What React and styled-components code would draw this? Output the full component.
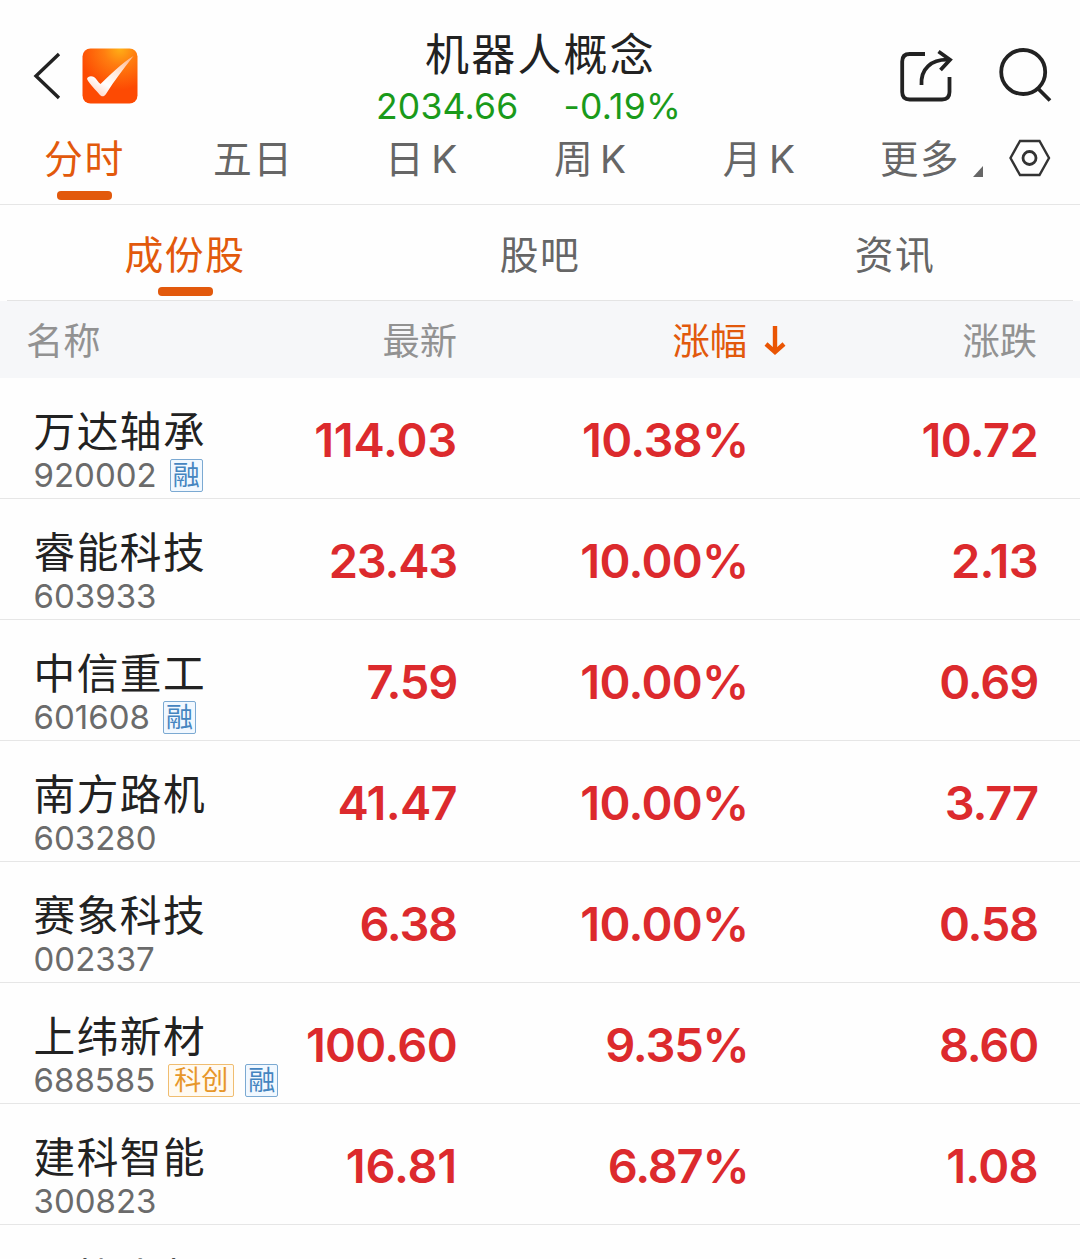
import React from 'react'
import styled, { createGlobalStyle } from 'styled-components'

const periods = ['分时', '五日', '日 K', '周 K', '月 K']
const sections = ['成份股', '股吧', '资讯']

const stocks = [
  { name: '万达轴承', code: '920002', tags: ['融'], price: '114.03', rate: '10.38%', change: '10.72' },
  { name: '睿能科技', code: '603933', tags: [], price: '23.43', rate: '10.00%', change: '2.13' },
  { name: '中信重工', code: '601608', tags: ['融'], price: '7.59', rate: '10.00%', change: '0.69' },
  { name: '南方路机', code: '603280', tags: [], price: '41.47', rate: '10.00%', change: '3.77' },
  { name: '赛象科技', code: '002337', tags: [], price: '6.38', rate: '10.00%', change: '0.58' },
  { name: '上纬新材', code: '688585', tags: ['科创', '融'], price: '100.60', rate: '9.35%', change: '8.60' },
  { name: '建科智能', code: '300823', tags: [], price: '16.81', rate: '6.87%', change: '1.08' },
  { name: '三协电机', code: '', tags: [], price: '', rate: '', change: '' },
]

// the narrow "1" needs more room than the other digits
const tracking = (text) => (text.split('1').length - 1) * 0.5 - 1.2

const Logo = () => (
  <svg width='56' height='56' viewBox='0 0 56 56'>
    <defs>
      <radialGradient id='logoBg' cx='0.68' cy='0' r='0.75'>
        <stop offset='0' stopColor='#ffb016' />
        <stop offset='0.4' stopColor='#ff7d10' />
        <stop offset='1' stopColor='#fd4a03' />
      </radialGradient>
      <linearGradient id='logoTick' x1='1' y1='0' x2='0.3' y2='1'>
        <stop offset='0' stopColor='#ffb080' />
        <stop offset='0.45' stopColor='#ffeade' />
        <stop offset='0.75' stopColor='#ffffff' />
        <stop offset='1' stopColor='#ffd9cc' />
      </linearGradient>
    </defs>
    <rect x='0.5' y='0.5' width='55' height='55' rx='8' fill='url(#logoBg)' />
    <path
      d='M5 31C5.500 28 9.500 27.500 12 29C14.500 30.500 16 34.500 18.500 36C28 27 40 15 51.500 8C42 20 32 33 24 46C22 49 19.500 49 17.500 46.500C14 42 8 37 5 31Z'
      fill='url(#logoTick)'
    />
  </svg>
)

const Cell = ({ children }) => <Value $tracking={tracking(children)}>{children}</Value>

const App = () => {
  return (
    <Page>
      <GlobalStyle />
      <Header>
        <HeaderLeft>
          <svg width='28' height='48' viewBox='0 0 28 48' fill='none' stroke='#222' strokeWidth='3.4'>
            <path d='M26 2L3 24L26 46' />
          </svg>
          <Logo />
        </HeaderLeft>
        <HeaderCenter>
          <Title>机器人概念</Title>
          <Quote>
            <span>2034.66</span>
            <span>-0.19%</span>
          </Quote>
        </HeaderCenter>
        <HeaderRight>
          <svg width='54' height='54' viewBox='0 0 54 54' fill='none' stroke='#222' strokeWidth='3.8'>
            <path d='M25 6H9.700Q2.200 6 2.200 13.500V44Q2.200 51.500 9.700 51.500H42Q49.500 51.500 49.500 44V29' />
            <path d='M21.500 37C20.500 21 31 11 49 11.700' />
            <path d='M38.500 3.500L50 11.700L40.500 22' />
          </svg>
          <svg width='54' height='56' viewBox='0 0 54 56' fill='none' stroke='#222' strokeWidth='3.8'>
            <circle cx='25.200' cy='24' r='22' />
            <path d='M39.500 40L52 52.500' />
          </svg>
        </HeaderRight>
      </Header>

      <PeriodBar>
        {periods.map((p, i) => (
          <Tab key={p} $active={i === 0}>
            <span>{p}</span>
          </Tab>
        ))}
        <More>
          更多
          <svg width='10' height='11' viewBox='0 0 10 11'>
            <path d='M10 0V11H0Z' fill='#666' />
          </svg>
        </More>
        <svg width='42' height='38' viewBox='0 0 42 38' fill='none' stroke='#333'>
          <path d='M11 2H30.500L40 19L30.500 36H11L1.500 19Z' strokeWidth='2.400' />
          <circle cx='20.500' cy='19' r='6.500' strokeWidth='2.800' />
        </svg>
      </PeriodBar>

      <SectionBar>
        {sections.map((s, i) => (
          <Tab key={s} $active={i === 0}>
            <span>{s}</span>
          </Tab>
        ))}
      </SectionBar>

      <TableHead>
        <HeadCell $left>名称</HeadCell>
        <HeadCell>最新</HeadCell>
        <HeadCell $sorted>
          涨幅
          <SortArrow width='22' height='30' viewBox='0 0 22 30' fill='none' stroke='#ea5504' strokeWidth='4.4'>
            <path d='M11 0V26' />
            <path d='M2 18L11 26L20 18' />
          </SortArrow>
        </HeadCell>
        <HeadCell>涨跌</HeadCell>
      </TableHead>

      {stocks.map((s) => (
        <Row key={s.name}>
          <div>
            <Name>{s.name}</Name>
            <Meta>
              <Code>{s.code}</Code>
              {s.tags.map((t) => (
                <Tag key={t} $wide={t.length > 1}>
                  {t}
                </Tag>
              ))}
            </Meta>
          </div>
          <Cell>{s.price}</Cell>
          <Cell>{s.rate}</Cell>
          <Cell>{s.change}</Cell>
        </Row>
      ))}
    </Page>
  )
}

export default App

const GlobalStyle = createGlobalStyle`
  * {
    box-sizing: border-box;
  }
  body {
    margin: 0;
    background-color: #fefefe;
    font-family: Inter, 'Noto Sans CJK SC', sans-serif;
  }
  svg {
    display: block;
    flex-shrink: 0;
  }
`
const Page = styled.div`
  width: 1080px;
  height: 1259px;
  overflow: hidden;
  background-color: #fefefe;
`
const Header = styled.div`
  height: 126px;
  padding: 0 28px 0 33px;
  display: grid;
  grid-template-columns: 1fr auto 1fr;
`
const HeaderLeft = styled.div`
  padding-top: 48px;
  display: flex;
  align-items: flex-start;
  gap: 21px;
  > svg:first-child {
    margin-top: 4px;
  }
`
const HeaderCenter = styled.div`
  padding-top: 25px;
  display: flex;
  flex-direction: column;
  align-items: center;
`
const Title = styled.div`
  padding-right: 4px;
  font-size: 44px;
  line-height: 60px;
  letter-spacing: 2.2px;
  color: #222;
`
const Quote = styled.div`
  padding-right: 28px;
  display: flex;
  gap: 45px;
  font-size: 35.5px;
  line-height: 44px;
  letter-spacing: 0.2px;
  color: #1a9a1a;
`
const HeaderRight = styled.div`
  padding-top: 48px;
  display: flex;
  justify-content: flex-end;
  gap: 44px;
`
const Tab = styled.div`
  display: flex;
  flex-direction: column;
  align-items: center;
  font-size: 38.8px;
  line-height: 56px;
  letter-spacing: 1.5px;
  word-spacing: -6.5px;
  white-space: pre;
  color: ${({ $active }) => ($active ? '#e2590c' : '#666')};
  &::after {
    content: '';
    width: 55px;
    height: 9px;
    margin-top: 4px;
    border-radius: 4px;
    background-color: ${({ $active }) => ($active ? '#e2590c' : 'transparent')};
  }
`
const PeriodBar = styled.div`
  height: 79px;
  padding-top: 5px;
  border-bottom: 1.5px solid #e6e6e6;
  display: grid;
  grid-template-columns: repeat(5, 168.8px) 165.5px 42px;
  > svg {
    margin-top: 8px;
  }
`
const More = styled.div`
  padding-left: 36px;
  display: flex;
  gap: 13px;
  font-size: 38.5px;
  line-height: 56px;
  letter-spacing: 1.5px;
  color: #666;
  svg {
    margin-top: 35px;
  }
`
const SectionBar = styled.div`
  height: 96px;
  margin: 0 7px;
  padding: 22px 0 0 0.5px;
  border-bottom: 1px solid #e4e4e4;
  display: grid;
  grid-template-columns: repeat(3, 355px);
`
const TableHead = styled.div`
  height: 77px;
  padding: 0 0 1px 26px;
  display: grid;
  grid-template-columns: 141px 290px 290px 290px;
  align-items: center;
  background-color: #f6f7f9;
`
const HeadCell = styled.div`
  position: relative;
  text-align: ${({ $left }) => ($left ? 'left' : 'right')};
  font-size: 37.3px;
  color: ${({ $sorted }) => ($sorted ? '#e2590c' : '#929292')};
`
const SortArrow = styled.svg`
  position: absolute;
  left: calc(100% + 17px);
  top: 14px;
`
const Row = styled.div`
  height: 121px;
  padding-left: 33.5px;
  border-bottom: 1.5px solid #e6e6e6;
  display: grid;
  grid-template-columns: 250.5px 173px 291.5px 289.5px;
`
const Name = styled.div`
  padding-top: 26px;
  font-size: 41.7px;
  line-height: 56px;
  letter-spacing: 1.5px;
  white-space: nowrap;
  color: #222;
`
const Meta = styled.div`
  height: 34px;
  margin-top: -2px;
  display: flex;
  align-items: center;
  gap: 11px;
`
const Code = styled.span`
  margin-right: 2px;
  font-size: 33px;
  line-height: 34px;
  color: #6b6b6b;
`
const Tag = styled.span`
  width: ${({ $wide }) => ($wide ? '66px' : '33px')};
  height: 33px;
  border: 1.5px solid ${({ $wide }) => ($wide ? '#f0bd70' : '#7ba9d2')};
  border-radius: 2px;
  background-color: ${({ $wide }) => ($wide ? '#fffaf2' : '#f1f8ff')};
  display: flex;
  justify-content: center;
  font-size: 27px;
  line-height: 32px;
  color: ${({ $wide }) => ($wide ? '#e7972a' : '#4585c0')};
`
const Value = styled.div`
  padding-top: 34px;
  text-align: right;
  font-size: 47px;
  font-weight: 600;
  line-height: 56px;
  letter-spacing: ${({ $tracking }) => $tracking}px;
  color: #dc2a2d;
`
